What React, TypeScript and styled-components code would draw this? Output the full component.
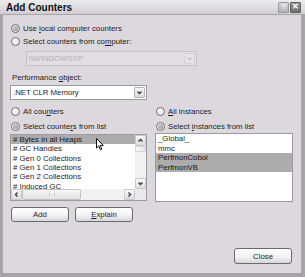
import React from "react";
import styled, { createGlobalStyle } from "styled-components";

const Global = createGlobalStyle`
  html, body { margin: 0; padding: 0; background: #ddd8de; }
  body { font-family: "Liberation Sans", Arial, sans-serif; font-size: 7.8px; color: #1c1c1c; }
`;

const Window = styled.div`
  width: 305px;
  height: 277px;
  display: flex;
  flex-direction: column;
  background: #ddd8de;
  overflow: hidden;
`;

const TitleBar = styled.div`
  height: 15px;
  box-sizing: border-box;
  display: flex;
  align-items: center;
  padding: 0 4px 0 6px;
  background: linear-gradient(#ecebee, #dedbe0 60%, #cfcbd1);
  border-bottom: 1px solid #a9a6ab;
`;

const Title = styled.div`
  font-size: 10px;
  font-weight: bold;
  color: #111;
  flex: 1;
  padding-top: 1px;
`;

const TitleBtn = styled.div<{ $dark?: boolean }>`
  width: 11px;
  height: 11px;
  margin-left: 1px;
  box-sizing: border-box;
  border: 1px solid ${(p) => (p.$dark ? "#5c5c5c" : "#9a9a9a")};
  background: ${(p) => (p.$dark ? "linear-gradient(#9a9a9a,#6e6e6e)" : "linear-gradient(#d8d8d8,#b2b2b2)")};
  color: ${(p) => (p.$dark ? "#fff" : "#f4f4f4")};
  font-size: 8px;
  font-weight: bold;
  display: flex;
  align-items: center;
  justify-content: center;
  line-height: 1;
  border-radius: 1px;
`;

const Body = styled.div`
  flex: 1;
  display: flex;
  flex-direction: column;
  box-sizing: border-box;
  border-left: 3px solid #a7a3a9;
  border-right: 4px solid #a7a3a9;
  border-bottom: 4px solid #a7a3a9;
  padding: 7px 8px 9px 7px;
`;

const RadioRow = styled.div<{ $h?: number }>`
  height: ${(p) => p.$h ?? 13}px;
  display: flex;
  align-items: center;
  gap: 3px;
  padding-left: 1px;
  white-space: nowrap;
`;

const RadioCircle = styled.span<{ $checked?: boolean }>`
  width: 9px;
  height: 9px;
  box-sizing: border-box;
  border-radius: 50%;
  border: 1px solid #6f6f72;
  background: radial-gradient(circle at 35% 35%, #ffffff, #dcdcde);
  display: flex;
  align-items: center;
  justify-content: center;
  flex: none;
  &::after {
    content: "";
    display: ${(p) => (p.$checked ? "block" : "none")};
    width: 5px;
    height: 5px;
    border-radius: 50%;
    background: radial-gradient(circle at 40% 40%, #c4c4c4, #8e8e8e);
  }
`;

const U = styled.span`
  text-decoration: underline;
`;

const Combo = styled.div<{ $disabled?: boolean; $w: number; $ml?: number; $mt: number }>`
  width: ${(p) => p.$w}px;
  height: 15px;
  margin-left: ${(p) => p.$ml ?? 0}px;
  margin-top: ${(p) => p.$mt}px;
  box-sizing: border-box;
  border: 1px solid ${(p) => (p.$disabled ? "#c6c2c8" : "#9a9a9c")};
  background: ${(p) => (p.$disabled ? "#e1dde2" : "#ffffff")};
  color: ${(p) => (p.$disabled ? "#b3b0b5" : "#1c1c1c")};
  display: flex;
  align-items: center;
  padding: 1px;
`;

const ComboText = styled.div`
  flex: 1;
  padding-left: 1px;
  white-space: nowrap;
`;

const ComboBtn = styled.div<{ $disabled?: boolean }>`
  width: 11px;
  height: 11px;
  box-sizing: border-box;
  border: 1px solid ${(p) => (p.$disabled ? "#d4d0d6" : "#b4b4b4")};
  border-radius: 1px;
  background: ${(p) => (p.$disabled ? "#e6e3e7" : "linear-gradient(#f6f6f6,#d9d9d9)")};
  display: flex;
  align-items: center;
  justify-content: center;
  color: ${(p) => (p.$disabled ? "#c2bfc4" : "#3a3a3a")};
`;

const Label = styled.div`
  height: 12px;
  margin-top: 5px;
  padding-left: 2px;
  display: flex;
  align-items: center;
`;

const Columns = styled.div`
  display: grid;
  grid-template-columns: 137px 138px;
  column-gap: 8px;
  margin-top: 5px;
`;

const Column = styled.div`
  display: flex;
  flex-direction: column;
  gap: 3px;
`;

const ListBox = styled.div`
  position: relative;
  height: 67px;
  margin-top: -1px;
  box-sizing: border-box;
  border: 1px solid #9c9c9e;
  background: #fff;
  display: grid;
  grid-template-columns: 1fr 11px;
  grid-template-rows: 1fr 11px;
  overflow: hidden;
`;

const PlainList = styled.div`
  height: 69px;
  margin-top: -2px;
  box-sizing: border-box;
  border: 1px solid #9c9c9e;
  background: #fff;
  padding: 0;
  display: flex;
  flex-direction: column;
`;

const Items = styled.div`
  overflow: hidden;
`;

const Item = styled.div<{ $sel?: boolean; $h?: number }>`
  height: ${(p) => p.$h ?? 9.33}px;
  line-height: ${(p) => p.$h ?? 9.33}px;
  padding-left: 2px;
  white-space: nowrap;
  background: ${(p) => (p.$sel ? "#acacac" : "transparent")};
  color: ${(p) => (p.$sel ? "#151515" : "#1c1c1c")};
`;

const VScroll = styled.div`
  display: flex;
  flex-direction: column;
  background: #f1f0f2;
`;

const HScroll = styled.div`
  display: flex;
  background: #f1f0f2;
`;

const Corner = styled.div`
  background: #ece9ee;
`;

const ScrollBtn = styled.div`
  width: 11px;
  height: 11px;
  flex: none;
  box-sizing: border-box;
  border: 1px solid #c8c8ca;
  border-radius: 1px;
  background: linear-gradient(#fafafa, #dcdcde);
  display: flex;
  align-items: center;
  justify-content: center;
  color: #3c3c3c;
`;

const Track = styled.div`
  flex: 1;
  display: flex;
`;

const VThumb = styled.div`
  height: 6px;
  box-sizing: border-box;
  border: 1px solid #d4d4d6;
  border-radius: 1px;
  background: linear-gradient(90deg, #f8f8f8, #e4e4e6);
`;

const HThumb = styled.div`
  width: 59px;
  box-sizing: border-box;
  border: 1px solid #c4c4c6;
  border-radius: 2px;
  background: linear-gradient(#f8f8f8, #e0e0e2);
  display: flex;
  align-items: center;
  justify-content: center;
`;

const Grip = styled.span`
  width: 4px;
  height: 3px;
  border-left: 1px solid #c8c8c8;
  border-right: 1px solid #c8c8c8;
`;

const Cursor = styled.svg`
  position: absolute;
  left: 85px;
  top: 3px;
`;

const ButtonRow = styled.div`
  display: flex;
  gap: 6px;
  margin-top: 3px;
  padding-left: 1px;
`;

const Button = styled.div<{ $h?: number }>`
  width: 58px;
  height: ${(p) => p.$h ?? 16}px;
  box-sizing: border-box;
  border: 1px solid #6a6a6c;
  border-radius: 3px;
  background: linear-gradient(#ffffff, #f0eff1 60%, #d8d6da);
  display: flex;
  align-items: center;
  justify-content: center;
  color: #1c1c1c;
`;

const Footer = styled.div`
  margin-top: auto;
  display: flex;
  justify-content: flex-end;
  padding-right: 1px;
`;

const Chevron = ({ dir }: { dir: "up" | "down" | "left" | "right" }) => {
  const d = {
    up: "M1.5 4.5 L3.5 2.5 L5.5 4.5",
    down: "M1.5 2.5 L3.5 4.5 L5.5 2.5",
    left: "M4.5 1.5 L2.5 3.5 L4.5 5.5",
    right: "M2.5 1.5 L4.5 3.5 L2.5 5.5",
  }[dir];
  return (
    <svg width="7" height="7" viewBox="0 0 7 7">
      <path d={d} fill="none" stroke="currentColor" strokeWidth="1.4" />
    </svg>
  );
};

export default function App() {
  return (
    <>
      <Global />
      <Window>
        <TitleBar>
          <Title>Add Counters</Title>
          <TitleBtn>?</TitleBtn>
          <TitleBtn $dark>✕</TitleBtn>
        </TitleBar>
        <Body>
          <RadioRow>
            <RadioCircle $checked />
            <span>
              Use <U>l</U>ocal computer counters
            </span>
          </RadioRow>
          <RadioRow>
            <RadioCircle />
            <span>
              Select counters from co<U>m</U>puter:
            </span>
          </RadioRow>
          <Combo $disabled $w={171} $ml={16} $mt={3}>
            <ComboText>\\WINDOWSXP</ComboText>
            <ComboBtn $disabled>
              <Chevron dir="down" />
            </ComboBtn>
          </Combo>
          <Label>
            <span>
              Performance <U>o</U>bject:
            </span>
          </Label>
          <Combo $w={137} $mt={2}>
            <ComboText>.NET CLR Memory</ComboText>
            <ComboBtn>
              <Chevron dir="down" />
            </ComboBtn>
          </Combo>
          <Columns>
            <Column>
              <RadioRow $h={12}>
                <RadioCircle />
                <span>
                  All cou<U>n</U>ters
                </span>
              </RadioRow>
              <RadioRow $h={12}>
                <RadioCircle $checked />
                <span>
                  Select counte<U>r</U>s from list
                </span>
              </RadioRow>
              <ListBox>
                <Items>
                  <Item $sel>&#35; Bytes in all Heaps</Item>
                  <Item>&#35; GC Handles</Item>
                  <Item>&#35; Gen 0 Collections</Item>
                  <Item>&#35; Gen 1 Collections</Item>
                  <Item>&#35; Gen 2 Collections</Item>
                  <Item>&#35; Induced GC</Item>
                </Items>
                <VScroll>
                  <ScrollBtn>
                    <Chevron dir="up" />
                  </ScrollBtn>
                  <VThumb />
                  <Track />
                  <ScrollBtn>
                    <Chevron dir="down" />
                  </ScrollBtn>
                </VScroll>
                <HScroll>
                  <ScrollBtn>
                    <Chevron dir="left" />
                  </ScrollBtn>
                  <Track>
                    <HThumb>
                      <Grip />
                    </HThumb>
                  </Track>
                  <ScrollBtn>
                    <Chevron dir="right" />
                  </ScrollBtn>
                </HScroll>
                <Corner />
                <Cursor width="8" height="13" viewBox="0 0 8 13">
                  <path
                    d="M0.5 0.5 L0.5 10 L2.8 7.8 L4.4 11.8 L5.8 11.2 L4.3 7.4 L7.3 7.4 Z"
                    fill="#ffffff"
                    stroke="#111"
                    strokeWidth="1"
                    strokeLinejoin="round"
                  />
                </Cursor>
              </ListBox>
              <ButtonRow>
                <Button $h={15}>Add</Button>
                <Button $h={15}>
                  <span>
                    <U>E</U>xplain
                  </span>
                </Button>
              </ButtonRow>
            </Column>
            <Column>
              <RadioRow $h={12}>
                <RadioCircle />
                <span>
                  <U>A</U>ll instances
                </span>
              </RadioRow>
              <RadioRow $h={12}>
                <RadioCircle $checked />
                <span>
                  Select <U>i</U>nstances from list
                </span>
              </RadioRow>
              <PlainList>
                <Item $h={9.6}>_Global_</Item>
                <Item $h={9.6}>mmc</Item>
                <Item $sel $h={9.6}>PerfmonCobol</Item>
                <Item $sel $h={9.6}>PerfmonVB</Item>
              </PlainList>
            </Column>
          </Columns>
          <Footer>
            <Button>Close</Button>
          </Footer>
        </Body>
      </Window>
    </>
  );
}
